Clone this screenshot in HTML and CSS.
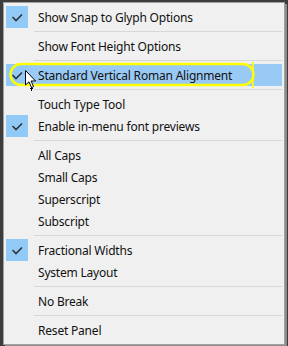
FILE: index.html
```html
<!DOCTYPE html>
<html lang="en">
<head>
    <meta charset="UTF-8">
    <title>Panel Menu</title>
    <link rel="stylesheet" href="styles.css">
</head>
<body>
    <div class="menu">
        <div class="item checked"><span class="check"><svg width="22" height="22" viewBox="0 0 22 22"><path d="M6.5 11 L10 14.5 L16 8.5" fill="none" stroke="#333" stroke-width="1.6"/></svg></span><span class="label">Show Snap to Glyph Options</span></div>
        <div class="sep"></div>
        <div class="item"><span class="check"></span><span class="label">Show Font Height Options</span></div>
        <div class="sep"></div>
        <div class="item checked hover"><span class="check"><svg width="22" height="22" viewBox="0 0 22 22"><path d="M6.5 11 L10 14.5 L16 8.5" fill="none" stroke="#333" stroke-width="1.6"/></svg></span><span class="label">Standard Vertical Roman Alignment</span></div>
        <div class="sep"></div>
        <div class="item"><span class="check"></span><span class="label">Touch Type Tool</span></div>
        <div class="item checked"><span class="check"><svg width="22" height="22" viewBox="0 0 22 22"><path d="M6.5 11 L10 14.5 L16 8.5" fill="none" stroke="#333" stroke-width="1.6"/></svg></span><span class="label">Enable in-menu font previews</span></div>
        <div class="sep"></div>
        <div class="item"><span class="check"></span><span class="label">All Caps</span></div>
        <div class="item"><span class="check"></span><span class="label">Small Caps</span></div>
        <div class="item"><span class="check"></span><span class="label">Superscript</span></div>
        <div class="item"><span class="check"></span><span class="label">Subscript</span></div>
        <div class="sep"></div>
        <div class="item checked"><span class="check"><svg width="22" height="22" viewBox="0 0 22 22"><path d="M6.5 11 L10 14.5 L16 8.5" fill="none" stroke="#333" stroke-width="1.6"/></svg></span><span class="label">Fractional Widths</span></div>
        <div class="item"><span class="check"></span><span class="label">System Layout</span></div>
        <div class="sep"></div>
        <div class="item"><span class="check"></span><span class="label">No Break</span></div>
        <div class="sep"></div>
        <div class="item"><span class="check"></span><span class="label">Reset Panel</span></div>
    </div>

    <!-- yellow annotation ring and mouse cursor over the hovered item -->
    <svg class="ring" width="250" height="26" viewBox="0 0 250 26">
        <path d="M12 2 H234 A10.5 10.5 0 0 1 234 23 H12 A10.5 10.5 0 0 1 12 2 Z" fill="none" stroke="#ffff00" stroke-width="2.4"/>
        <line x1="244" y1="0" x2="244" y2="26" stroke="#ffff00" stroke-width="1.6"/>
    </svg>
    <svg class="cursor" width="14" height="22" viewBox="0 0 14 22">
        <path d="M0.5 0.5 V15 L4 11.8 L6.6 17.6 L8.6 16.7 L6.1 11 H10.6 Z" fill="#fff" stroke="#000" stroke-width="1"/>
        <path d="M5 18.5 h3 M6.5 17 v4" stroke="#000" stroke-width="1"/>
    </svg>
</body>
</html>
```

FILE: styles.css
```css
/* panel flyout menu */
body {
    margin: 0;
    width: 288px;
    height: 346px;
    overflow: hidden;
    background-color: #3c3c3c;
    font-family: "Noto Sans", Arial, sans-serif;
    font-size: 12px;
    letter-spacing: -0.2px;
    color: #111;
    position: relative;
}
.menu {
    margin: 2px 0 0 3px;
    width: 280px;
    padding: 3px 0 3px 0;
    background-color: #f0f0f0;
    border: 1px solid #a0a0a0;
    box-shadow: 2px 2px 0 #8c8c8c;
}
.item {
    display: flex;
    align-items: center;
    height: 22px;
    margin: 0 2px;
}
.item.hover {
    background-color: #99c9f5;
}
.check {
    width: 22px;
    height: 22px;
    flex: none;
}
.checked .check {
    background-color: #91c9f7;
}
.check svg {
    display: block;
}
.label {
    margin-left: 10px;
    white-space: nowrap;
}
.sep {
    height: 1px;
    margin: 3px 2px 3px 30px;
    background-color: #d7d7d7;
}
.ring {
    position: absolute;
    left: 9px;
    top: 62px;
}
.cursor {
    position: absolute;
    left: 25px;
    top: 70px;
}
```
